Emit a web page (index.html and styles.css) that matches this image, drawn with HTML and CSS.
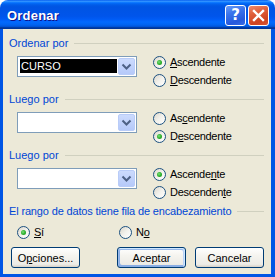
FILE: index.html
```html
<!DOCTYPE html>
<html lang="es">
<head>
<meta charset="utf-8">
<title>Ordenar</title>
<link rel="stylesheet" href="styles.css">
</head>
<body>
<div class="window">
  <div class="titlebar">
    <span class="title">Ordenar</span>
    <div class="controls">
      <span class="tbtn help">?</span>
      <span class="tbtn close"><svg width="13" height="13" viewBox="0 0 13 13"><path d="M2 2 L11 11 M11 2 L2 11" stroke="#fff" stroke-width="2.4" stroke-linecap="square" fill="none"/></svg></span>
    </div>
  </div>
  <div class="client">
    <section class="group">
      <div class="legend"><span class="legend-text">Ordenar por</span><span class="rule"></span></div>
      <div class="row">
        <div class="combo">
          <span class="value selected">CURSO</span>
          <span class="drop"><svg width="15" height="15" viewBox="0 0 15 15"><path d="M3.5 5.5 L7.5 9.5 L11.5 5.5" stroke="#4D6185" stroke-width="2" fill="none"/></svg></span>
        </div>
        <div class="radios">
          <label class="radio checked"><span class="dot"></span><span><u>A</u>scendente</span></label>
          <label class="radio"><span class="dot"></span><span><u>D</u>escendente</span></label>
        </div>
      </div>
    </section>
    <section class="group">
      <div class="legend"><span class="legend-text">Luego por</span><span class="rule"></span></div>
      <div class="row">
        <div class="combo">
          <span class="value"></span>
          <span class="drop"><svg width="15" height="15" viewBox="0 0 15 15"><path d="M3.5 5.5 L7.5 9.5 L11.5 5.5" stroke="#4D6185" stroke-width="2" fill="none"/></svg></span>
        </div>
        <div class="radios">
          <label class="radio"><span class="dot"></span><span>As<u>c</u>endente</span></label>
          <label class="radio checked"><span class="dot"></span><span>D<u>e</u>scendente</span></label>
        </div>
      </div>
    </section>
    <section class="group">
      <div class="legend"><span class="legend-text">Luego por</span><span class="rule"></span></div>
      <div class="row">
        <div class="combo">
          <span class="value"></span>
          <span class="drop"><svg width="15" height="15" viewBox="0 0 15 15"><path d="M3.5 5.5 L7.5 9.5 L11.5 5.5" stroke="#4D6185" stroke-width="2" fill="none"/></svg></span>
        </div>
        <div class="radios">
          <label class="radio checked"><span class="dot"></span><span>Ascende<u>n</u>te</span></label>
          <label class="radio"><span class="dot"></span><span>Descenden<u>t</u>e</span></label>
        </div>
      </div>
    </section>
    <div class="legend"><span class="legend-text long">El rango de datos tiene fila de encabezamiento</span><span class="rule"></span></div>
    <div class="yesno">
      <label class="radio checked first"><span class="dot"></span><span><u>S</u>í</span></label>
      <label class="radio"><span class="dot"></span><span>N<u>o</u></span></label>
    </div>
    <div class="buttons">
      <button class="btn">O<u>p</u>ciones...</button>
      <span class="spacer"></span>
      <button class="btn default">Aceptar</button>
      <button class="btn">Cancelar</button>
    </div>
  </div>
</div>
</body>
</html>
```
FILE: styles.css
```css
html, body {
  margin: 0;
  padding: 0;
  background: #ffffff;
}
body {
  font-family: "Liberation Sans", Arial, sans-serif;
  font-size: 11px;
  color: #000;
}
.window {
  width: 275px;
  height: 277px;
  display: flex;
  flex-direction: column;
}
.titlebar {
  height: 29px;
  flex: none;
  border-radius: 8px 8px 0 0;
  background: linear-gradient(180deg, #0058EE 0%, #3593FF 4%, #288EFF 6%, #127DFF 8%, #036FFC 10%, #0262EE 14%, #0057E5 20%, #0054E3 24%, #0055EB 56%, #005BF5 66%, #026AFE 76%, #0062EF 86%, #0052D6 92%, #0040AB 94%, #003092 100%);
  display: flex;
  align-items: center;
  padding: 0 6px 0 7px;
  box-sizing: border-box;
}
.title {
  flex: 1;
  color: #fff;
  font-weight: bold;
  font-size: 13px;
  letter-spacing: 0.2px;
  text-shadow: 1px 1px #0F1089;
  padding-top: 1px;
}
.controls {
  display: flex;
  gap: 2px;
  padding-top: 1px;
}
.tbtn {
  width: 21px;
  height: 21px;
  box-sizing: border-box;
  border: 1px solid #fff;
  border-radius: 3px;
  display: flex;
  align-items: center;
  justify-content: center;
  color: #fff;
}
.help {
  background: linear-gradient(160deg, #6A9BF7 0%, #3A74EC 35%, #2659DC 75%, #3B6EE6 100%);
  font-family: "DejaVu Sans", sans-serif;
  font-weight: bold;
  font-size: 15px;
  line-height: 1;
}
.close {
  background: linear-gradient(160deg, #EE8A6C 0%, #E0603C 35%, #CE4320 75%, #D85534 100%);
}
.client {
  flex: 1;
  background: #ECE9D8;
  border-left: 3px solid #0055E5;
  border-right: 4px solid #0055E5;
  border-bottom: 3px solid #0055E5;
  padding: 8px 7px 0 6px;
  display: flex;
  flex-direction: column;
}
.group {
  height: 56px;
  display: flex;
  flex-direction: column;
}
.legend {
  display: flex;
  align-items: center;
  height: 13px;
  line-height: 13px;
  gap: 6px;
}
.legend-text {
  color: #0046D5;
  white-space: nowrap;
}
.legend-text.long {
  letter-spacing: -0.15px;
}
.rule {
  flex: 1;
  height: 1px;
  background: #D0D0BF;
}
.row {
  display: flex;
  margin-top: 6px;
  margin-left: 8px;
  height: 37px;
}
.combo {
  width: 120px;
  height: 21px;
  box-sizing: border-box;
  border: 1px solid #7F9DB9;
  background: #fff;
  display: flex;
  padding: 1px 1px 1px 0;
  gap: 1px;
}
.value {
  flex: 1;
  margin: 1px 0 2px 2px;
  color: #fff;
  line-height: 14px;
  padding-left: 1px;
}
.value.selected {
  background: #000;
}
.drop {
  width: 17px;
  height: 17px;
  box-sizing: border-box;
  border: 1px solid #B9CCF8;
  border-radius: 2px;
  background: linear-gradient(180deg, #CCDBFD 0%, #C1D2FB 50%, #B5C9F9 100%);
  display: flex;
  align-items: center;
  justify-content: center;
}
.radios {
  margin-left: 16px;
  margin-top: -3px;
  display: flex;
  flex-direction: column;
}
.radio {
  display: flex;
  align-items: center;
  height: 18px;
  gap: 4px;
  white-space: nowrap;
  letter-spacing: -0.3px;
}
.dot {
  width: 13px;
  height: 13px;
  box-sizing: border-box;
  border-radius: 50%;
  border: 1px solid #1C5180;
  background: linear-gradient(135deg, #DCD7CB 0%, #F2F1EC 50%, #FFFFFF 100%);
  display: flex;
  align-items: center;
  justify-content: center;
}
.radio.checked .dot::after {
  content: "";
  width: 5px;
  height: 5px;
  border-radius: 50%;
  background: radial-gradient(circle at 40% 40%, #7BE07B 0%, #2EB12E 50%, #1A8F1A 100%);
}
.yesno {
  display: flex;
  margin-top: 5px;
  margin-left: 8px;
}
.radio.first {
  width: 102px;
}
.buttons {
  display: flex;
  margin-top: 6px;
  margin-left: 2px;
  gap: 9px;
}
.spacer {
  flex: 1;
}
.btn {
  width: 69px;
  height: 21px;
  box-sizing: border-box;
  border: 1px solid #003C74;
  border-radius: 3px;
  background: linear-gradient(180deg, #FFFFFF 0%, #F5F4EF 40%, #ECEBE6 86%, #D6D0C5 100%);
  font-family: "Liberation Sans", Arial, sans-serif;
  font-size: 11px;
  color: #000;
  padding: 0;
}
.btn.default {
  box-shadow: inset -1px 1px #CEE7FF, inset 1px 2px #98B8EA, inset -2px 2px #BCD4F6, inset 1px -1px #89ADE4, inset 2px -2px #89ADE4;
}
u {
  text-decoration: underline;
  text-underline-offset: 1px;
}
```
